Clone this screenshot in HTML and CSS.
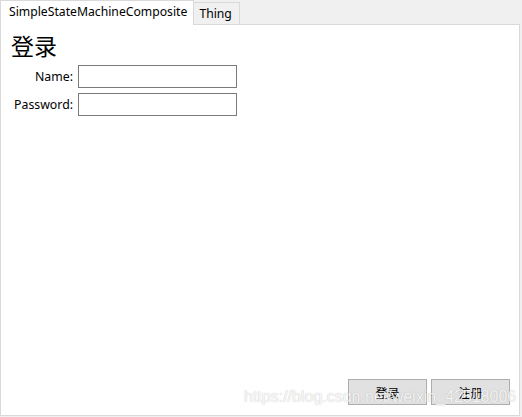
FILE: index.html
```html
<!DOCTYPE html>
<html>
<head>
<meta charset="utf-8">
<link rel="stylesheet" href="styles.css">
</head>
<body>
<div class="window">
  <div class="tabs">
    <div class="tab active">SimpleStateMachineComposite</div>
    <div class="tab">Thing</div>
  </div>
  <div class="panel">
    <h1 class="title">登录</h1>
    <div class="form">
      <label class="label">Name:</label>
      <div class="input"></div>
      <label class="label">Password:</label>
      <div class="input"></div>
    </div>
    <div class="actions">
      <button class="btn">登录</button>
      <button class="btn">注册</button>
    </div>
  </div>
  <div class="watermark">https://blog.csdn.net/weixin_42518006</div>
</div>
</body>
</html>
```
FILE: styles.css
```css
html, body {
  margin: 0;
  padding: 0;
  background: #f0f0f0;
}
.window {
  position: relative;
  width: 522px;
  height: 417px;
  font-family: "Noto Sans", "Noto Sans CJK SC", sans-serif;
  font-size: 12px;
  color: #000;
}
.tabs {
  display: flex;
  align-items: flex-end;
  height: 24px;
}
.tab {
  box-sizing: border-box;
  height: 22px;
  padding: 0 7px 0 5px;
  border: 1px solid #d9d9d9;
  border-bottom: none;
  border-left: none;
  background: #f0f0f0;
  line-height: 22px;
  font-size: 12.2px;
}
.tab.active {
  position: relative;
  z-index: 1;
  height: 25px;
  margin-bottom: -1px;
  padding: 0 6px 0 8px;
  border-left: 1px solid #d9d9d9;
  background: #fff;
  line-height: 21px;
}
.panel {
  box-sizing: border-box;
  width: 520px;
  height: 392px;
  border: 1px solid #d9d9d9;
  background: #fff;
  display: flex;
  flex-direction: column;
}
.title {
  margin: 5px 0 0 10px;
  font-family: "Noto Sans CJK SC", serif;
  font-size: 23px;
  font-weight: 400;
  line-height: 30px;
}
.form {
  display: grid;
  grid-template-columns: 60px 159px;
  column-gap: 4px;
  row-gap: 5px;
  margin: 5px 0 0 13px;
}
.label {
  text-align: right;
  line-height: 23px;
  white-space: nowrap;
  font-size: 12.3px;
  padding-right: 1px;
}
.input {
  box-sizing: border-box;
  height: 23px;
  border: 1px solid #7a7a7a;
  background: #fff;
}
.actions {
  margin-top: auto;
  display: flex;
  justify-content: flex-end;
  gap: 4px;
  padding: 0 9px 10px 0;
}
.btn {
  box-sizing: border-box;
  width: 79px;
  height: 26px;
  border: 1px solid #adadad;
  background: #e1e1e1;
  font-family: "Noto Sans CJK SC", sans-serif;
  font-size: 12px;
  color: #000;
  padding: 0;
}
.watermark {
  position: absolute;
  left: 244px;
  top: 388px;
  font-family: "Liberation Sans", sans-serif;
  font-size: 16px;
  color: rgba(255, 255, 255, 0.9);
  text-shadow: 0 0 1px rgba(0,0,0,0.3);
  white-space: nowrap;
}
```
